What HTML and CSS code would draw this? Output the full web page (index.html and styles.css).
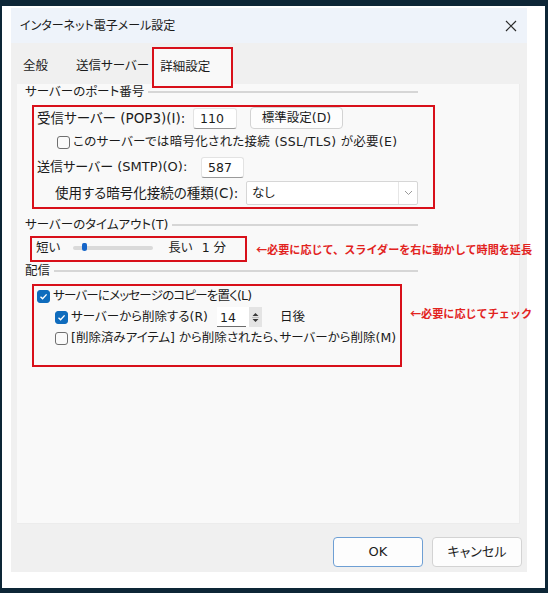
FILE: index.html
```html
<!DOCTYPE html>
<html lang="ja">
<head>
    <meta charset="UTF-8">
    <title>インターネット電子メール設定</title>
    <link rel="stylesheet" href="styles.css">
</head>
<body>
<div class="screen">
    <div class="dialog">
        <div class="titlebar">
            <span>インターネット電子メール設定</span>
            <svg class="close" width="12" height="12" viewBox="0 0 12 12">
                <path d="M1 1 L11 11 M11 1 L1 11" stroke="#2b2b2b" stroke-width="1.2" fill="none"/>
            </svg>
        </div>

        <div class="tabs">
            <div class="tab tab-first">全般</div>
            <div class="tab tab-second">送信サーバー</div>
            <div class="tab tab-active">詳細設定</div>
        </div>

        <div class="panel">
            <div class="group-title"><span>サーバーのポート番号</span><i></i></div>
            <div class="mark mark-ports">
                <div class="row row-pop">
                    <span class="label label-pop">受信サーバー (POP3)(I):</span>
                    <span class="field field-pop">110</span>
                    <span class="button button-default">標準設定(D)</span>
                </div>
                <div class="row row-ssl">
                    <span class="check"></span>
                    <span class="text-ssl">このサーバーでは暗号化された接続 (SSL/TLS) が必要(E)</span>
                </div>
                <div class="row row-smtp">
                    <span class="label label-smtp">送信サーバー (SMTP)(O):</span>
                    <span class="field field-smtp">587</span>
                </div>
                <div class="row row-crypt">
                    <span class="label label-crypt">使用する暗号化接続の種類(C):</span>
                    <span class="select">
                        <span>なし</span>
                        <span class="select-arrow">
                            <svg width="9" height="6" viewBox="0 0 9 6"><path d="M1 1 L4.5 4.5 L8 1" stroke="#9a9a9a" stroke-width="1" fill="none"/></svg>
                        </span>
                    </span>
                </div>
            </div>

            <div class="group-title group-timeout"><span>サーバーのタイムアウト(T)</span><i></i></div>
            <div class="note-row note-row-timeout">
                <div class="mark mark-timeout">
                    <span>短い</span>
                    <span class="slider"><span class="slider-thumb"></span></span>
                    <span class="slider-long">長い</span>
                    <span class="slider-value">1 分</span>
                </div>
                <span class="note">←必要に応じて、スライダーを右に動かして時間を延長</span>
            </div>

            <div class="group-title group-delivery"><span>配信</span><i></i></div>
            <div class="note-row">
                <div class="mark mark-delivery">
                    <div class="row row-copy">
                        <span class="check checked"></span>
                        <span class="text-copy">サーバーにメッセージのコピーを置く(L)</span>
                    </div>
                    <div class="row row-delete">
                        <span class="check checked"></span>
                        <span class="label label-delete">サーバーから削除する(R)</span>
                        <span class="spin">
                            <span class="spin-value">14</span>
                            <span class="spin-buttons">
                                <svg width="7" height="11" viewBox="0 0 7 11"><path d="M0.5 4 L3.5 1 L6.5 4 Z M0.5 7 L3.5 10 L6.5 7 Z" fill="#3a3a3a"/><path d="M0 5.5 H7" stroke="#bdbdbd" stroke-width="1"/></svg>
                            </span>
                        </span>
                        <span class="days">日後</span>
                    </div>
                    <div class="row row-trash">
                        <span class="check"></span>
                        <span>[削除済みアイテム] から削除されたら、サーバーから削除(M)</span>
                    </div>
                </div>
                <span class="note note-check">←必要に応じてチェック</span>
            </div>
        </div>

        <div class="footer">
            <span class="button button-ok">OK</span>
            <span class="button button-cancel">キャンセル</span>
        </div>
    </div>
</div>
</body>
</html>
```

FILE: styles.css
```css
:root {
    --frame-color: #0d2636;
    --title-color: #eef3fa;
    --dialog-color: #f0f0f0;
    --panel-color: #f9f9f9;
    --text-color: #1b1b1b;
    --mark-color: #d8101a;
    --note-color: #e2231e;
    --accent-color: #0f6cbd;
}

* {
    box-sizing: border-box;
}

body {
    margin: 0;
    background: #fff;
    font-family: "DejaVu Sans", "Noto Sans CJK JP", sans-serif;
    font-size: 12.5px;
    line-height: 16px;
    font-feature-settings: "palt";
    color: var(--text-color);
}

.screen {
    width: 548px;
    height: 593px;
    border-style: solid;
    border-color: var(--frame-color);
    border-width: 6px 3px 5px 2px;
    background: #fff;
    padding: 2px 0 0 9px;
}

.dialog {
    width: 516px;
    height: 564px;
    background: var(--dialog-color);
    display: flex;
    flex-direction: column;
}

.titlebar {
    height: 35px;
    background: var(--title-color);
    display: flex;
    align-items: center;
    justify-content: space-between;
    padding: 0 10px 0 9px;
    font-size: 12px;
}

.close {
    display: block;
}

/* tabs */
.tabs {
    height: 41px;
    display: flex;
    align-items: flex-end;
    padding-left: 6px;
    font-size: 12.5px;
}

.tab {
    height: 35px;
    padding: 9px 6px 0;
}

.tab-second {
    margin-left: 16px;
    padding-right: 4px;
}

.tab-active {
    width: 79px;
    height: 39px;
    padding: 11px 0 0 7px;
    background: var(--panel-color);
    outline: 2px solid var(--mark-color);
    outline-offset: -1px;
    margin-bottom: -3px;
    position: relative;
    z-index: 1;
}

.panel {
    margin-left: 6px;
    width: 503px;
    height: 440px;
    background: var(--panel-color);
    border-right: 1px solid #ececec;
    border-bottom: 1px solid #ececec;
    padding-left: 8px;
}

.group-title {
    width: 393px;
    display: flex;
    align-items: center;
    height: 16px;
}

.group-title i {
    flex: 1;
    height: 2px;
    background: #d6d6d6;
    margin-left: 4px;
}

.group-timeout {
    margin-top: 8px;
}

.group-delivery {
    margin-top: 1px;
}

.mark {
    border: 2px solid var(--mark-color);
    flex-shrink: 0;
}

.row {
    display: flex;
    align-items: center;
    white-space: nowrap;
}

.label {
    flex-shrink: 0;
}

/* port block */
.mark-ports {
    margin: 5px 0 0 7px;
    width: 403px;
    height: 104px;
}

.row-pop {
    height: 22px;
    padding-left: 3px;
}

.label-pop {
    width: 156px;
    font-size: 13.5px;
}

.field {
    height: 21px;
    background: #fff;
    border: 1px solid #e3e3e3;
    border-bottom-color: #9a9a9a;
    border-radius: 3px;
    padding: 2px 0 0 6px;
}

.field-pop {
    width: 44px;
}

.button {
    display: flex;
    align-items: center;
    justify-content: center;
    background: #fdfdfd;
    border: 1px solid #d3d3d3;
    border-radius: 4px;
}

.button-default {
    margin-left: 13px;
    width: 93px;
    height: 22px;
}

.row-ssl {
    height: 26px;
    padding-left: 23px;
    gap: 3px;
}

.text-ssl {
    letter-spacing: 0.3px;
}

.check {
    width: 13px;
    height: 13px;
    border: 1px solid #6f6f6f;
    border-radius: 3px;
    background: #fafafa;
    flex-shrink: 0;
}

.check.checked {
    border-color: var(--accent-color);
    background: var(--accent-color) url("data:image/svg+xml,%3Csvg xmlns='http://www.w3.org/2000/svg' width='11' height='11' viewBox='0 0 11 11'%3E%3Cpath d='M2.5 5.8 L4.6 7.8 L8.6 3.4' stroke='white' stroke-width='1.4' fill='none'/%3E%3C/svg%3E") center / 11px 11px no-repeat;
}

.row-smtp {
    height: 24px;
    padding-left: 3px;
}

.label-smtp {
    width: 164px;
    font-size: 13px;
}

.field-smtp {
    width: 43px;
}

.row-crypt {
    height: 28px;
    padding-left: 21px;
}

.label-crypt {
    width: 191px;
    font-size: 13.5px;
}

.select {
    width: 172px;
    height: 24px;
    background: #fff;
    border: 1px solid #d6d6d6;
    border-radius: 2px;
    display: flex;
    align-items: center;
    justify-content: space-between;
    padding-left: 5px;
}

.select-arrow {
    width: 19px;
    height: 22px;
    border-left: 1px solid #e6e6e6;
    display: flex;
    align-items: center;
    justify-content: center;
}

/* timeout */
.note-row {
    display: flex;
    align-items: flex-start;
}

.note-row-timeout {
    align-items: center;
    margin-top: 3px;
}

.mark-timeout {
    margin-left: 5px;
    width: 217px;
    height: 26px;
    display: flex;
    align-items: center;
    padding: 0 0 2px 4px;
}

.slider {
    margin-left: 13px;
    width: 80px;
    height: 4px;
    background: #dadada;
    border-radius: 2px;
    position: relative;
}

.slider-thumb {
    position: absolute;
    left: 9px;
    top: -3px;
    width: 5px;
    height: 8px;
    border-radius: 2px 2px 3px 3px;
    background: #1565c8;
}

.slider-long {
    margin-left: 15px;
}

.slider-value {
    margin-left: 9px;
}

.note {
    flex-shrink: 0;
    margin-left: 9px;
    color: var(--note-color);
    font-family: "Noto Sans CJK JP", sans-serif;
    font-feature-settings: normal;
    font-size: 11.1px;
    font-weight: bold;
    line-height: 14px;
    white-space: nowrap;
}

.note-check {
    margin-left: 8px;
    margin-top: 27px;
}

/* delivery */
.mark-delivery {
    margin: 5px 0 0 7px;
    width: 370px;
    height: 83px;
}

.row-copy {
    height: 20px;
    padding-left: 3px;
    gap: 3px;
}

.text-copy {
    letter-spacing: -0.8px;
}

.row-delete {
    height: 22px;
    padding-left: 21px;
    gap: 3px;
}

.label-delete {
    width: 143px;
}

.spin {
    width: 45px;
    height: 20px;
    display: flex;
    background: #fff;
}

.spin-value {
    flex: 1;
    padding: 3px 0 0 3px;
    border-bottom: 1px solid #6b6b6b;
    margin-right: 3px;
}

.spin-buttons {
    width: 13px;
    background: #e4e4e4;
    display: flex;
    align-items: center;
    justify-content: center;
}

.days {
    margin-left: 15px;
}

.row-trash {
    height: 20px;
    padding-left: 21px;
    gap: 3px;
}

/* footer */
.footer {
    flex: 1;
    display: flex;
    justify-content: flex-end;
    gap: 9px;
    padding: 13px 5px 0 0;
    font-size: 13px;
}

.button-ok,
.button-cancel {
    width: 90px;
    height: 30px;
}

.button-ok {
    border-color: #6e9fd4;
}
```
